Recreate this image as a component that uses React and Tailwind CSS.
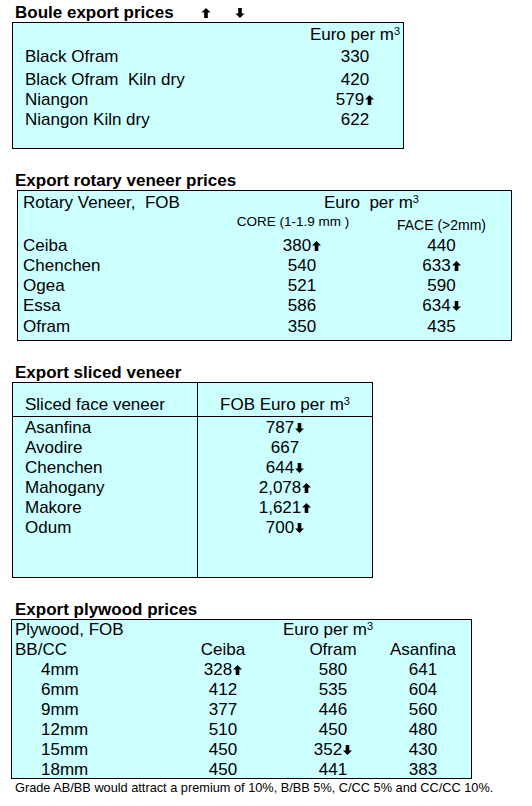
import React from "react"

const font = "font-['Liberation_Sans',Arial,sans-serif]"

// solid block arrows used as price movement markers
const Arrow = ({ dir = "up", className = "" }) => (
  <svg
    viewBox="0 0 10 11"
    className={`inline-block w-[9px] h-[10px] ${className}`}
    fill="#000"
  >
    {dir === "up" ? (
      <polygon points="5,0 10,5 7,5 7,11 3,11 3,5 0,5" />
    ) : (
      <polygon points="5,11 10,6 7,6 7,0 3,0 3,6 0,6" />
    )}
  </svg>
)

const Val = ({ v, a }) => (
  <span className="inline-flex items-center whitespace-nowrap">
    {v}
    {a && <Arrow dir={a} className="ml-[1px]" />}
  </span>
)

const Per = ({ text = "Euro per m" }) => (
  <span className="whitespace-nowrap">
    {text}
    <sup className="text-[11px]">3</sup>
  </span>
)

const Title = ({ children, className = "" }) => (
  <div className={`h-[19px] leading-[19px] pl-[15px] text-[17px] font-bold ${className}`}>
    {children}
  </div>
)

const boule = [
  ["Black Ofram", "330", null, "mt-[2px]"],
  ["Black Ofram\u00a0 Kiln dry", "420", null, "mt-[3px]"],
  ["Niangon", "579", "up", ""],
  ["Niangon Kiln dry", "622", null, ""],
]

const rotary = [
  ["Ceiba", ["380", "up"], ["440", null], "mt-[3px]"],
  ["Chenchen", ["540", null], ["633", "up"], ""],
  ["Ogea", ["521", null], ["590", null], ""],
  ["Essa", ["586", null], ["634", "down"], ""],
  ["Ofram", ["350", null], ["435", null], "mt-[1px]"],
]

const sliced = [
  ["Asanfina", "787", "down"],
  ["Avodire", "667", null],
  ["Chenchen", "644", "down"],
  ["Mahogany", "2,078", "up"],
  ["Makore", "1,621", "up"],
  ["Odum", "700", "down"],
]

const plywood = [
  ["4mm", ["328", "up"], ["580"], ["641"]],
  ["6mm", ["412"], ["535"], ["604"]],
  ["9mm", ["377"], ["446"], ["560"]],
  ["12mm", ["510"], ["450"], ["480"]],
  ["15mm", ["450"], ["352", "down"], ["430"]],
  ["18mm", ["450"], ["441"], ["383"]],
]

export default function App() {
  return (
    <div className={`w-[532px] h-[806px] bg-white text-black ${font} flex flex-col`}>
      {/* Boule */}
      <Title className="mt-[3px] flex items-center">
        <span>Boule export prices</span>
        <Arrow dir="up" className="ml-[27px] w-[10px] h-[9px]" />
        <Arrow dir="down" className="ml-[24px] w-[10px] h-[9px]" />
      </Title>
      <div className="ml-[12px] w-[392px] h-[127px] border border-black bg-[#ccffff] pl-[12px] text-[17px]">
        <div className="mt-[2px] h-[20px] leading-[20px] grid grid-cols-[290px_80px]">
          <div />
          <div className="flex justify-center">
            <Per />
          </div>
        </div>
        {boule.map(([name, v, a, mt]) => (
          <div key={name} className={`${mt} h-[20px] leading-[20px] grid grid-cols-[290px_80px]`}>
            <div className="whitespace-pre">{name}</div>
            <div className="flex justify-center">
              <Val v={v} a={a} />
            </div>
          </div>
        ))}
      </div>

      {/* Rotary veneer */}
      <Title className="mt-[22px]">Export rotary veneer prices</Title>
      <div className="ml-[17px] w-[495px] h-[151px] border border-black bg-[#ccffff] pl-[5px] text-[17px]">
        <div className="mt-[2px] h-[20px] leading-[20px] grid grid-cols-[209px_140px_139px]">
          <div className="whitespace-pre">Rotary Veneer,  FOB</div>
          <div className="col-span-2 flex justify-center">
            <Per text={"Euro\u00a0 per m"} />
          </div>
        </div>
        <div className="h-[20px] leading-[20px] grid grid-cols-[209px_140px_139px]">
          <div />
          <div className="flex justify-center pr-[18px] -mt-[1px] text-[13.5px]">CORE (1-1.9 mm )</div>
          <div className="flex justify-center mt-[2px] text-[14px]">FACE (&gt;2mm)</div>
        </div>
        {rotary.map(([name, c, f, mt]) => (
          <div key={name} className={`${mt} h-[20px] leading-[20px] grid grid-cols-[209px_140px_139px]`}>
            <div>{name}</div>
            <div className="flex justify-center">
              <Val v={c[0]} a={c[1]} />
            </div>
            <div className="flex justify-center">
              <Val v={f[0]} a={f[1]} />
            </div>
          </div>
        ))}
      </div>

      {/* Sliced veneer */}
      <Title className="mt-[22px]">Export sliced veneer</Title>
      <div className="ml-[12px] w-[361px] h-[196px] border border-black bg-[#ccffff] text-[17px] flex flex-col">
        <div className="h-[34px] border-b border-black grid grid-cols-[185px_1fr]">
          <div className="border-r border-black pl-[12px] flex items-end pb-[2px] leading-[18px]">
            Sliced face veneer
          </div>
          <div className="flex items-end justify-center pb-[2px] leading-[18px]">
            <Per text="FOB Euro per m" />
          </div>
        </div>
        <div className="flex-1 grid grid-cols-[185px_1fr]">
          <div className="border-r border-black pl-[12px] pt-[1px]">
            {sliced.map(([name]) => (
              <div key={name} className="h-[20px] leading-[20px]">
                {name}
              </div>
            ))}
          </div>
          <div className="pt-[1px]">
            {sliced.map(([name, v, a]) => (
              <div key={name} className="h-[20px] leading-[20px] flex justify-center">
                <Val v={v} a={a} />
              </div>
            ))}
          </div>
        </div>
      </div>

      {/* Plywood */}
      <Title className="mt-[22px]">Export plywood prices</Title>
      <div className="ml-[11px] w-[461px] h-[160px] border border-black bg-[#ccffff] pl-[3px] text-[17px]">
        <div className="h-[20px] leading-[20px] grid grid-cols-[153px_110px_110px_70px]">
          <div>Plywood, FOB</div>
          <div />
          <div className="flex justify-center pr-[10px]">
            <Per />
          </div>
          <div />
        </div>
        <div className="h-[20px] leading-[20px] grid grid-cols-[153px_110px_110px_70px]">
          <div>BB/CC</div>
          <div className="flex justify-center">Ceiba</div>
          <div className="flex justify-center">Ofram</div>
          <div className="flex justify-center">Asanfina</div>
        </div>
        {plywood.map(([size, ...cols]) => (
          <div key={size} className="h-[20px] leading-[20px] grid grid-cols-[153px_110px_110px_70px]">
            <div className="pl-[26px]">{size}</div>
            {cols.map(([v, a], i) => (
              <div key={i} className="flex justify-center">
                <Val v={v} a={a} />
              </div>
            ))}
          </div>
        ))}
      </div>
      <div className="mt-[1px] pl-[15px] text-[12.75px] leading-[16px]">
        Grade AB/BB would attract a premium of 10%, B/BB 5%, C/CC 5% and CC/CC 10%.
      </div>
    </div>
  )
}
